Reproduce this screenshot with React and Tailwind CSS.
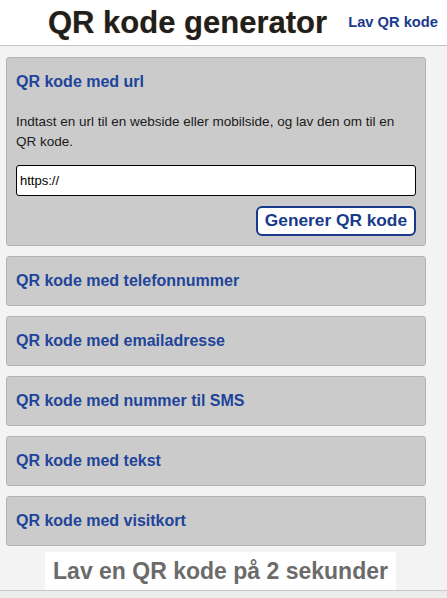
import React, { useState } from 'react';

const sections = [
  'QR kode med telefonnummer',
  'QR kode med emailadresse',
  'QR kode med nummer til SMS',
  'QR kode med tekst',
  'QR kode med visitkort',
];

export default function App() {
  const [url, setUrl] = useState('https://');

  return (
    <div className="min-h-[598px] bg-[#f3f3f3] font-['Liberation_Sans',Arial,sans-serif]">
      {/* header */}
      <header className="h-[46px] bg-white border-b border-[#c4c4c4] flex items-center">
        <h1 className="ml-[48px] text-[31px] leading-none font-bold text-[#1f1f1f] [text-shadow:0_0_1px_#c9a16a]">
          QR kode generator
        </h1>
        <a href="#" className="ml-auto mr-[9px] text-[14.7px] font-bold text-[#1a3a8c]">Lav QR kode</a>
      </header>

      <main className="w-[420px] ml-[6px] pt-[11px] flex flex-col gap-[10px]">
        <section className="bg-[#cbcbcb] border border-[#b3b3b3] rounded-[3px] px-[9px] pt-[14px] pb-[9px]">
          <h2 className="text-[16px] leading-[20px] font-bold text-[#1e449a]">QR kode med url</h2>
          <p className="mt-[20px] pr-[8px] text-[13.5px] leading-[20px] text-[#1a1a1a]">
            Indtast en url til en webside eller mobilside, og lav den om til en QR kode.
          </p>
          <input
            value={url}
            onChange={(e) => setUrl(e.target.value)}
            className="mt-[13px] block w-full h-[31px] bg-white border border-black rounded-[3px] px-[3px] text-[13px] text-black outline-none"
          />
          <div className="mt-[10px] flex justify-end">
            <button className="h-[30px] px-[7px] bg-white border-2 border-[#173a8a] rounded-[6px] text-[17.3px] font-bold text-[#173a8a]">
              Generer QR kode
            </button>
          </div>
        </section>

        {sections.map((s) => (
          <section key={s} className="h-[50px] bg-[#cbcbcb] border border-[#b3b3b3] rounded-[3px] px-[9px] flex items-center">
            <h2 className="text-[16px] font-bold text-[#1e449a]">{s}</h2>
          </section>
        ))}
      </main>

      <div className="mt-[6px] ml-[45px] w-[351px] h-[38px] bg-white flex items-center justify-center">
        <span className="text-[23px] font-bold text-[#6b6b6b]">Lav en QR kode på 2 sekunder</span>
      </div>
      <div className="h-[8px] bg-[#ececec] border-t border-[#c8c8c8]"></div>
    </div>
  );
}
